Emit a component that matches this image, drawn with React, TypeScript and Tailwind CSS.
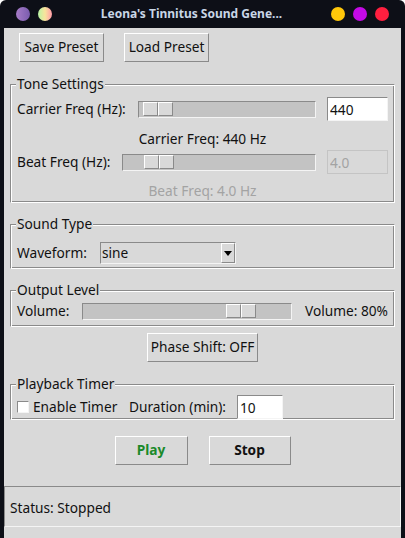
import React from "react";

const raised =
  "border border-t-white border-l-white border-r-[#8a8a8a] border-b-[#8a8a8a] bg-[#d9d9d9]";
const sunken =
  "border border-t-[#8a8a8a] border-l-[#8a8a8a] border-r-[#f4f4f4] border-b-[#f4f4f4]";
const groove =
  "border border-t-[#8a8a8a] border-l-[#8a8a8a] border-r-white border-b-white shadow-[inset_1px_1px_0_white,inset_-1px_-1px_0_#8a8a8a]";

function Frame({ title, className, children }: { title: string; className?: string; children: React.ReactNode }) {
  return (
    <fieldset className={`mx-[6px] px-[6px] ${groove} ${className ?? ""}`}>
      <legend className="h-[18px] leading-[18px] -ml-[1px] px-[1px] bg-[#d9d9d9]">{title}</legend>
      {children}
    </fieldset>
  );
}

function Slider({ width, offset }: { width: string; offset: string }) {
  return (
    <div className={`h-[17px] ${width} ${offset} ${sunken} bg-[#c3c3c3] flex items-center`}>
      <div className={`w-[15px] h-[14px] ${raised}`} />
      <div className={`w-[15px] h-[14px] ${raised}`} />
    </div>
  );
}

function Dot({ className }: { className: string }) {
  return <div className={`w-[14px] h-[14px] rounded-full ${className}`} />;
}

export default function App() {
  return (
    <div className="w-[405px] h-[538px] bg-[#0d0f17] flex flex-col font-['Noto_Sans',sans-serif] text-[13.7px] text-[#111] rounded-t-[6px] overflow-hidden">
      {/* Title bar */}
      <div className="h-[28px] shrink-0 flex items-center justify-between px-[16px]">
        <div className="flex gap-[8px]">
          <Dot className="bg-gradient-to-r from-[#a77cc8] to-[#7a5cae]" />
          <Dot className="bg-gradient-to-r from-[#b6f4a4] via-[#f8e49c] to-[#ff9aa8]" />
        </div>
        <div className="font-bold text-[12px] text-[#c9d6e6]">Leona's Tinnitus Sound Gene...</div>
        <div className="flex gap-[8px]">
          <Dot className="bg-[#ffc70a]" />
          <Dot className="bg-[#c40ae6]" />
          <Dot className="bg-[#ff1f3f]" />
        </div>
      </div>

      {/* Window body */}
      <div className="flex-1 mx-[4px] bg-[#d9d9d9] flex flex-col">
        <div className="flex gap-[20px] pt-[5px] pl-[15px]">
          <button className={`w-[85px] h-[29px] ${raised}`}>Save Preset</button>
          <button className={`w-[85px] h-[29px] ${raised}`}>Load Preset</button>
        </div>

        <Frame title="Tone Settings" className="mt-[13px] pb-[1px]">
          <div className="mt-[4px] h-[24px] flex items-center">
            <span className="w-[121px]">Carrier Freq (Hz):</span>
            <Slider width="w-[178px]" offset="pl-[4px]" />
            <input
              readOnly
              value="440"
              className={`ml-[11px] w-[61px] h-[24px] px-[2px] bg-white outline-none ${sunken}`}
            />
          </div>
          <div className="mt-[8px] h-[20px] flex items-center justify-center">Carrier Freq: 440 Hz</div>
          <div className="mt-[1px] h-[24px] flex items-center">
            <span className="w-[105px]">Beat Freq (Hz):</span>
            <Slider width="w-[194px]" offset="pl-[21px]" />
            <input
              readOnly
              value="4.0"
              className={`ml-[11px] w-[61px] h-[24px] px-[2px] bg-[#d9d9d9] text-[#a3a3a3] outline-none border border-[#c4c4c4]`}
            />
          </div>
          <div className="mt-[7px] h-[20px] flex items-center justify-center text-[#a3a3a3]">Beat Freq: 4.0 Hz</div>
        </Frame>

        <Frame title="Sound Type" className="mt-[12px] pb-[4px]">
          <div className="mt-[9px] h-[22px] flex items-center">
            <span className="w-[83px]">Waveform:</span>
            <div className={`w-[136px] h-[22px] flex items-center ${sunken} bg-[#d9d9d9]`}>
              <span className="flex-1 px-[1px]">sine</span>
              <div className={`w-[14px] h-[20px] ${raised} flex items-center justify-center`}>
                <div className="w-0 h-0 border-l-[4px] border-r-[4px] border-t-[5px] border-l-transparent border-r-transparent border-t-black" />
              </div>
            </div>
          </div>
        </Frame>

        <Frame title="Output Level" className="mt-[12px] pb-[5px]">
          <div className="mt-[2px] h-[20px] flex items-center">
            <span className="w-[65px]">Volume:</span>
            <Slider width="w-[210px]" offset="pl-[143px]" />
            <span className="flex-1 text-right">Volume: 80%</span>
          </div>
        </Frame>

        <div className="mt-[6px] flex justify-center">
          <button className={`w-[111px] h-[29px] ${raised}`}>Phase Shift: OFF</button>
        </div>

        <Frame title="Playback Timer" className="mt-[13px]">
          <div className="mt-[2px] h-[24px] flex items-center">
            <div className="w-[112px] flex items-center">
              <div className={`w-[12px] h-[12px] bg-white ${sunken}`} />
              <span className="ml-[4px]">Enable Timer</span>
            </div>
            <span className="w-[108px]">Duration (min):</span>
            <input
              readOnly
              value="10"
              className={`w-[46px] h-[24px] px-[2px] bg-white outline-none ${sunken}`}
            />
          </div>
        </Frame>

        <div className="mt-[16px] flex justify-center gap-[21px]">
          <button className={`w-[73px] h-[29px] font-bold text-[#1a8a2a] ${raised}`}>Play</button>
          <button className={`w-[82px] h-[29px] font-bold ${raised}`}>Stop</button>
        </div>

        <div className={`mt-[21px] h-[41px] flex items-center pl-[5px] pt-[3px] ${sunken}`}>Status: Stopped</div>
      </div>
    </div>
  );
}
